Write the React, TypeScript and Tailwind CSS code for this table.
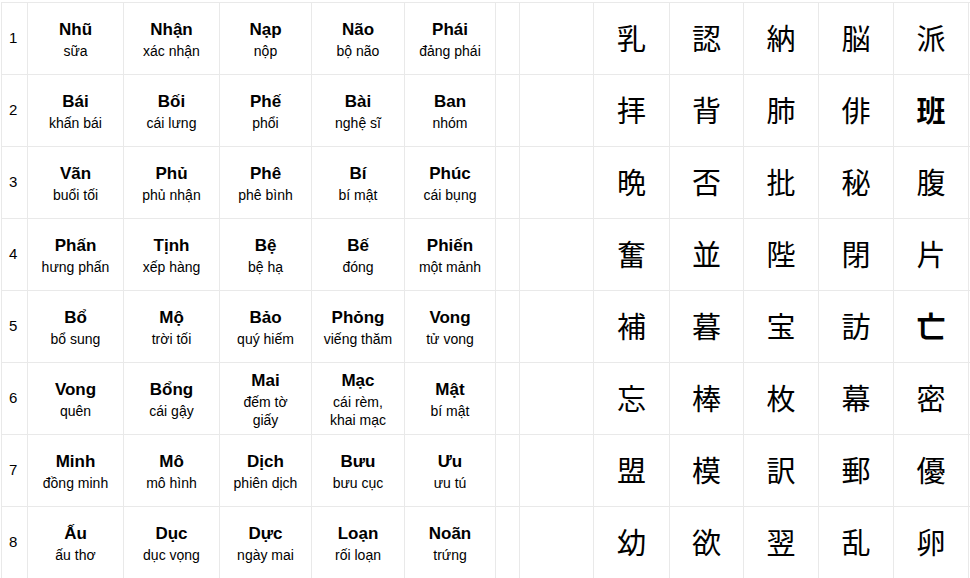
type Word = { title: string; meaning: string[] };

const rows: { words: Word[]; kanji: string[]; bold?: number }[] = [
  {
    words: [
      { title: 'Nhũ', meaning: ['sữa'] },
      { title: 'Nhận', meaning: ['xác nhận'] },
      { title: 'Nạp', meaning: ['nộp'] },
      { title: 'Não', meaning: ['bộ não'] },
      { title: 'Phái', meaning: ['đảng phái'] },
    ],
    kanji: ['乳', '認', '納', '脳', '派'],
  },
  {
    words: [
      { title: 'Bái', meaning: ['khấn bái'] },
      { title: 'Bối', meaning: ['cái lưng'] },
      { title: 'Phế', meaning: ['phổi'] },
      { title: 'Bài', meaning: ['nghệ sĩ'] },
      { title: 'Ban', meaning: ['nhóm'] },
    ],
    kanji: ['拝', '背', '肺', '俳', '班'],
    bold: 4,
  },
  {
    words: [
      { title: 'Vãn', meaning: ['buổi tối'] },
      { title: 'Phủ', meaning: ['phủ nhận'] },
      { title: 'Phê', meaning: ['phê bình'] },
      { title: 'Bí', meaning: ['bí mật'] },
      { title: 'Phúc', meaning: ['cái bụng'] },
    ],
    kanji: ['晩', '否', '批', '秘', '腹'],
  },
  {
    words: [
      { title: 'Phấn', meaning: ['hưng phấn'] },
      { title: 'Tịnh', meaning: ['xếp hàng'] },
      { title: 'Bệ', meaning: ['bệ hạ'] },
      { title: 'Bế', meaning: ['đóng'] },
      { title: 'Phiến', meaning: ['một mảnh'] },
    ],
    kanji: ['奮', '並', '陛', '閉', '片'],
  },
  {
    words: [
      { title: 'Bổ', meaning: ['bổ sung'] },
      { title: 'Mộ', meaning: ['trời tối'] },
      { title: 'Bảo', meaning: ['quý hiếm'] },
      { title: 'Phỏng', meaning: ['viếng thăm'] },
      { title: 'Vong', meaning: ['tử vong'] },
    ],
    kanji: ['補', '暮', '宝', '訪', '亡'],
    bold: 4,
  },
  {
    words: [
      { title: 'Vong', meaning: ['quên'] },
      { title: 'Bổng', meaning: ['cái gậy'] },
      { title: 'Mai', meaning: ['đếm tờ', 'giấy'] },
      { title: 'Mạc', meaning: ['cái rèm,', 'khai mạc'] },
      { title: 'Mật', meaning: ['bí mật'] },
    ],
    kanji: ['忘', '棒', '枚', '幕', '密'],
  },
  {
    words: [
      { title: 'Minh', meaning: ['đồng minh'] },
      { title: 'Mô', meaning: ['mô hình'] },
      { title: 'Dịch', meaning: ['phiên dịch'] },
      { title: 'Bưu', meaning: ['bưu cục'] },
      { title: 'Ưu', meaning: ['ưu tú'] },
    ],
    kanji: ['盟', '模', '訳', '郵', '優'],
  },
  {
    words: [
      { title: 'Ấu', meaning: ['ấu thơ'] },
      { title: 'Dục', meaning: ['dục vọng'] },
      { title: 'Dực', meaning: ['ngày mai'] },
      { title: 'Loạn', meaning: ['rối loạn'] },
      { title: 'Noãn', meaning: ['trứng'] },
    ],
    kanji: ['幼', '欲', '翌', '乱', '卵'],
  },
];

export default function App() {
  return (
    <div className="w-[970px] h-[578px] overflow-hidden bg-white">
      <div
        className="mt-[2px] ml-px grid gap-px bg-[#e9e9e9] pt-px pl-px text-black grid-cols-[25px_95px_95px_91px_92px_90px_23px_73px_75px_73px_74px_74px_74px_1fr] auto-rows-[71px]"
        style={{ fontFamily: '"Liberation Sans", Arial, sans-serif' }}
      >
        {rows.map((row, i) => (
          <div key={i} className="contents">
            <div className="bg-white flex items-center pl-[7px] text-[15px]">{i + 1}</div>
            {row.words.map((w, j) => (
              <div key={j} className="bg-white flex flex-col items-center justify-center text-center">
                <div className="text-[17px] font-bold leading-[24px]">{w.title}</div>
                {w.meaning.map((m, k) => (
                  <div key={k} className="text-[14px] leading-[18px]">{m}</div>
                ))}
              </div>
            ))}
            <div className="bg-white" />
            <div className="bg-white" />
            {row.kanji.map((k, j) => (
              <div
                key={j}
                className={`bg-white flex items-center justify-center pb-px text-[29px] ${row.bold === j ? 'font-bold' : 'font-normal'}`}
                style={{ fontFamily: '"Noto Sans CJK JP", sans-serif' }}
              >
                {k}
              </div>
            ))}
            <div className="bg-white" />
          </div>
        ))}
      </div>
    </div>
  );
}
